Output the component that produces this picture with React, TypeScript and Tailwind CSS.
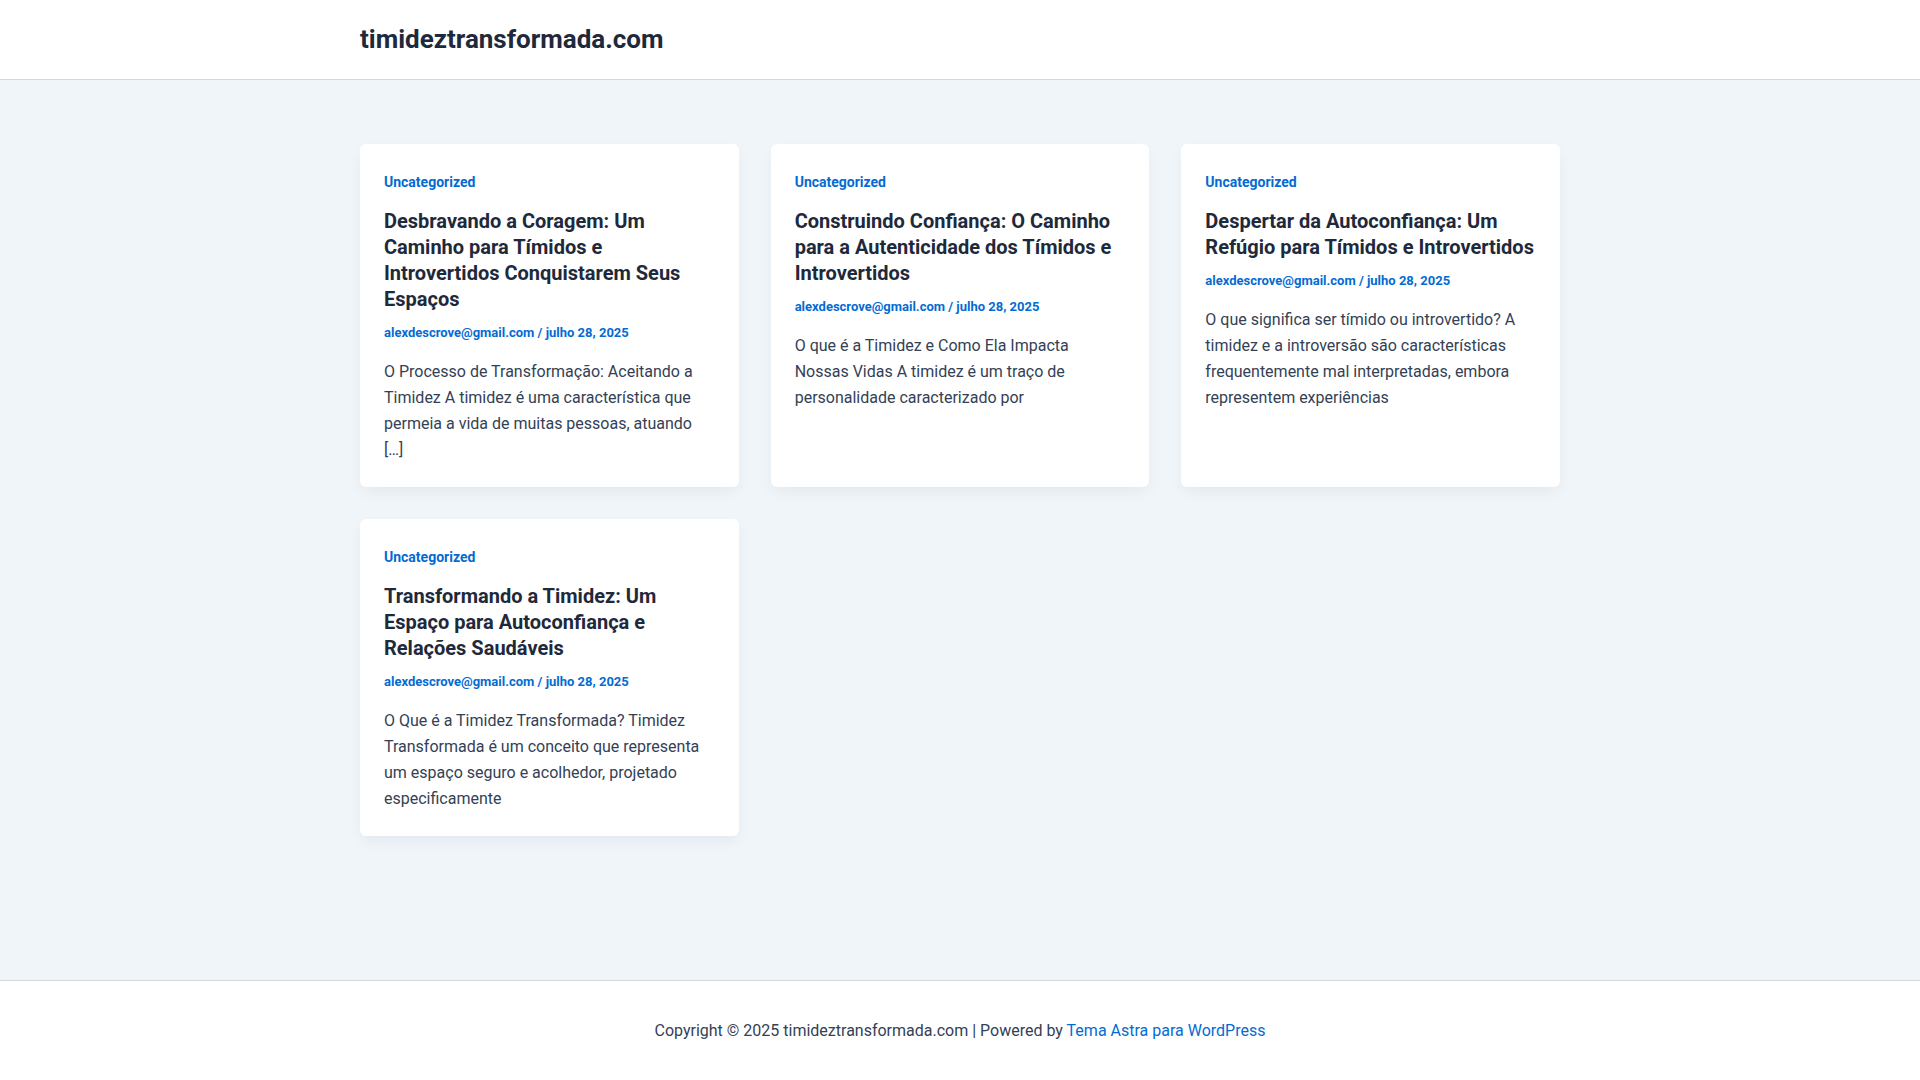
import React from "react";

type Post = { title: string; excerpt: string };

const posts: Post[] = [
  {
    title:
      "Desbravando a Coragem: Um Caminho para Tímidos e Introvertidos Conquistarem Seus Espaços",
    excerpt:
      "O Processo de Transformação: Aceitando a Timidez A timidez é uma característica que permeia a vida de muitas pessoas, atuando […]",
  },
  {
    title:
      "Construindo Confiança: O Caminho para a Autenticidade dos Tímidos e Introvertidos",
    excerpt:
      "O que é a Timidez e Como Ela Impacta Nossas Vidas A timidez é um traço de personalidade caracterizado por",
  },
  {
    title: "Despertar da Autoconfiança: Um Refúgio para Tímidos e Introvertidos",
    excerpt:
      "O que significa ser tímido ou introvertido? A timidez e a introversão são características frequentemente mal interpretadas, embora representem experiências",
  },
  {
    title:
      "Transformando a Timidez: Um Espaço para Autoconfiança e Relações Saudáveis",
    excerpt:
      "O Que é a Timidez Transformada? Timidez Transformada é um conceito que representa um espaço seguro e acolhedor, projetado especificamente",
  },
];

function Card({ post }: { post: Post }) {
  return (
    <article className="rounded-[6px] bg-white px-6 pt-[28px] pb-[24px] shadow-[0_6px_15px_-2px_rgba(16,24,40,0.06)]">
      <a className="block text-[14px] font-bold leading-[21px] text-[#046bd2]">
        Uncategorized
      </a>
      <h2 className="mt-[15px] text-[20px] font-bold leading-[26px] text-[#1e293b]">
        {post.title}
      </h2>
      <div className="mt-[11px] text-[13px] font-bold leading-[20px] text-[#046bd2]">
        alexdescrove@gmail.com / julho 28, 2025
      </div>
      <p className="mt-4 text-[16px] leading-[26px] text-[#334155]">
        {post.excerpt}
      </p>
    </article>
  );
}

export default function App() {
  return (
    <div className="flex min-h-screen flex-col bg-[#f0f5fa] font-['Roboto',sans-serif]">
      <header className="h-[80px] border-b border-[#d5d9df] bg-white">
        <div className="mx-auto flex h-full w-[1200px] items-center pb-[2px]">
          <span className="text-[26px] font-bold leading-none text-[#1e293b]">
            timideztransformada.com
          </span>
        </div>
      </header>
      <main className="flex-1 pt-16 pb-[143px]">
        <div className="mx-auto grid w-[1200px] grid-cols-3 items-stretch gap-8">
          {posts.map((p, i) => (
            <Card key={i} post={p} />
          ))}
        </div>
      </main>
      <footer className="flex h-[100px] items-center justify-center border-t border-[#d5d9df] bg-white text-[16px] text-[#334155]">
        <span>
          Copyright © 2025 timideztransformada.com | Powered by{" "}
          <a className="text-[#046bd2]">Tema Astra para WordPress</a>
        </span>
      </footer>
    </div>
  );
}
